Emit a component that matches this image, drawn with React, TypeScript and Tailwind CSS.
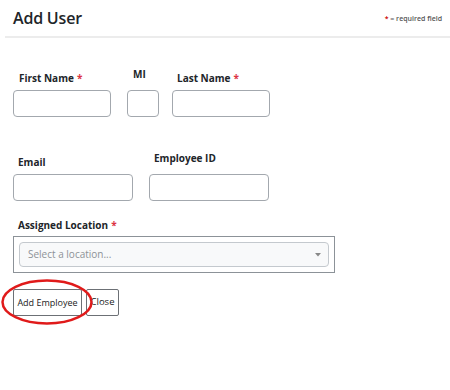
export default function App() {
  return (
    <div className="w-[450px] h-[390px] bg-white text-[#212529] font-['Open_Sans',sans-serif]">
      <div className="flex items-start justify-between pl-[13px] pr-[8px] pt-[6px]">
        <h1 className="text-[16px] font-semibold leading-[24px] tracking-[-0.2px] text-[#212529]">Add User</h1>
        <span className="mt-[8px] text-[7px] font-semibold text-[#555]">
          <span className="text-[#c00]">*</span> = required field
        </span>
      </div>
      <div className="ml-[5px] mt-[6px] h-[2px] bg-[#ececec]" />

      <div className="flex gap-[16px] pl-[13px] mt-[32px]">
        <div className="flex flex-col w-[98px]">
          <label className="pl-[6px] text-[10px] font-bold leading-[14px] mt-[1px]">
            First Name<span className="ml-[3px] text-[#dc3545]">*</span>
          </label>
          <input className="mt-[5px] h-[27px] w-[98px] rounded-[4px] border border-[#a3a8ae]" />
        </div>
        <div className="flex flex-col w-[32px]">
          <label className="pl-[6px] text-[10px] font-bold leading-[14px] -mt-[3px]">MI</label>
          <input className="mt-[9px] h-[27px] w-[32px] rounded-[4px] border border-[#a3a8ae]" />
        </div>
        <div className="flex flex-col w-[98px] -ml-[3px]">
          <label className="pl-[5px] text-[10px] font-bold leading-[14px] mt-[1px]">
            Last Name<span className="ml-[3px] text-[#dc3545]">*</span>
          </label>
          <input className="mt-[5px] h-[27px] w-[98px] rounded-[4px] border border-[#a3a8ae]" />
        </div>
      </div>

      <div className="flex gap-[16px] pl-[13px] mt-[35px]">
        <div className="flex flex-col w-[120px]">
          <label className="pl-[5px] text-[10px] font-bold leading-[14px] mt-[3px]">Email</label>
          <input className="mt-[5px] h-[27px] w-[120px] rounded-[4px] border border-[#a3a8ae]" />
        </div>
        <div className="flex flex-col w-[120px]">
          <label className="pl-[5px] text-[10px] font-bold leading-[14px] -mt-[1px]">Employee ID</label>
          <input className="mt-[9px] h-[27px] w-[120px] rounded-[4px] border border-[#a3a8ae]" />
        </div>
      </div>

      <div className="pl-[13px] mt-[17px]">
        <label className="block pl-[5px] text-[10px] font-bold leading-[14px]">
          Assigned Location<span className="ml-[3px] text-[#dc3545]">*</span>
        </label>
        <div className="mt-[4px] w-[322px] border border-[#8c9298] p-[5px]">
          <div className="flex h-[25px] items-center justify-between rounded-[4px] border border-[#c4c9ce] bg-[#f8f9fa] pl-[8px] pr-[6px]">
            <span className="text-[10px] text-[#8d9297]">Select a location...</span>
            <svg width="6" height="4" viewBox="0 0 6 4" className="mr-[1px]">
              <path d="M0 0 L6 0 L3 3.5 Z" fill="#888" />
            </svg>
          </div>
        </div>
      </div>

      <div className="relative flex gap-[4px] pl-[13px] mt-[16px]">
        <button className="h-[27px] w-[69px] rounded-[2px] border border-[#6c7075] bg-white text-[9px] text-[#222]">
          Add Employee
        </button>
        <button className="h-[27px] w-[33px] rounded-[2px] border border-[#6c7075] bg-white text-[9.5px] text-[#222]">
          Close
        </button>
        <svg className="absolute left-[1px] -top-[10px]" width="92" height="46" viewBox="0 0 92 46">
          <ellipse cx="46" cy="23" rx="44.5" ry="21.5" fill="none" stroke="#e01a1a" strokeWidth="2.5" />
        </svg>
      </div>
    </div>
  );
}
